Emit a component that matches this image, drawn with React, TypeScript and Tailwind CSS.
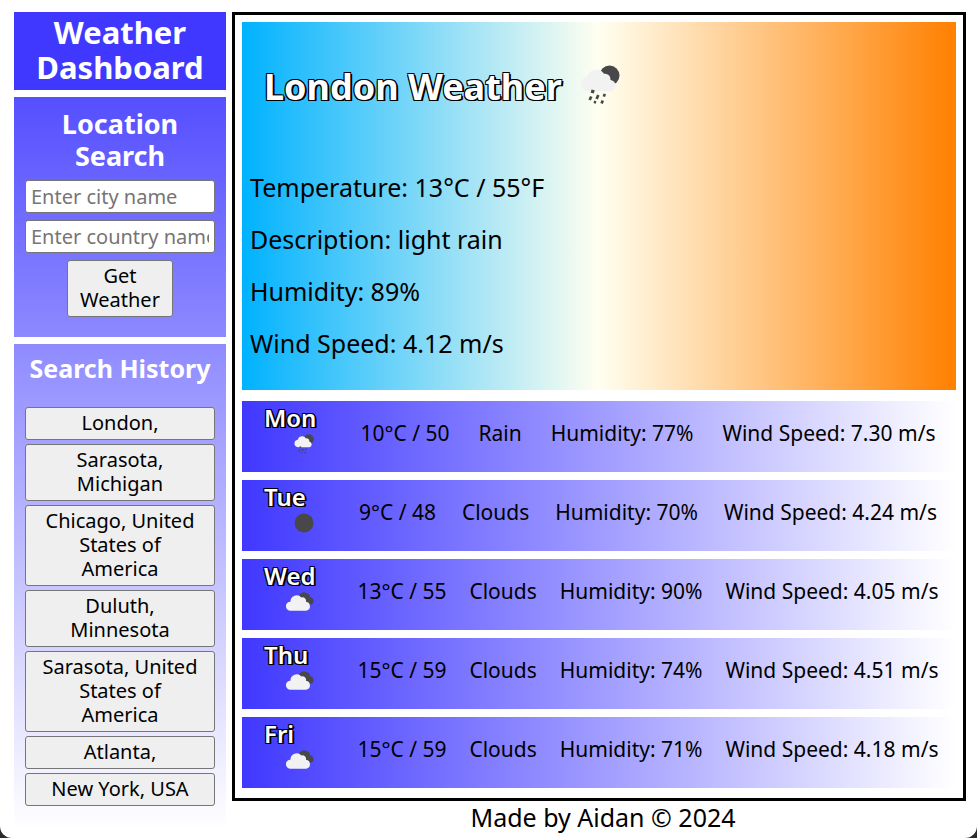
import { useState } from "react";

type IconName = "rain" | "dark" | "clouds";

const FONT = "font-['Noto_Sans',sans-serif]";

const OUTLINE =
  "[text-shadow:-1px_-1px_0_#000,1px_-1px_0_#000,-1px_1px_0_#000,1px_1px_0_#000,2px_1px_0_#000]";

const forecast: {
  day: string;
  icon: IconName;
  temp: string;
  sky: string;
  humidity: string;
  wind: string;
}[] = [
  { day: "Mon", icon: "rain", temp: "10°C / 50", sky: "Rain", humidity: "77%", wind: "7.30" },
  { day: "Tue", icon: "dark", temp: "9°C / 48", sky: "Clouds", humidity: "70%", wind: "4.24" },
  { day: "Wed", icon: "clouds", temp: "13°C / 55", sky: "Clouds", humidity: "90%", wind: "4.05" },
  { day: "Thu", icon: "clouds", temp: "15°C / 59", sky: "Clouds", humidity: "74%", wind: "4.51" },
  { day: "Fri", icon: "clouds", temp: "15°C / 59", sky: "Clouds", humidity: "71%", wind: "4.18" },
];

const searches = [
  "London,",
  "Sarasota, Michigan",
  "Chicago, United States of America",
  "Duluth, Minnesota",
  "Sarasota, United States of America",
  "Atlanta,",
  "New York, USA",
];

const conditions = [
  "Temperature: 13°C / 55°F",
  "Description: light rain",
  "Humidity: 89%",
  "Wind Speed: 4.12 m/s",
];

function WeatherIcon({ name, className }: { name: IconName; className: string }) {
  return (
    <svg viewBox="0 0 40 40" className={className} aria-hidden="true">
      {name === "rain" && (
        <>
          <circle cx="29.5" cy="10.5" r="10" fill="#48484a" />
          <path
            d="M8 26.5a7.6 7.6 0 0 1-.6-15.1 9.2 9.2 0 0 1 16.6-2.6 5.6 5.6 0 0 1 6.6 6.2 5.9 5.9 0 0 1 .4 11.5z"
            fill="#f2f2f2"
          />
          <g fill="#48484a">
            <path d="M11.5 24.500l3.200.8-.8 3.200-3.200-.8z" />
            <path d="M17 29.500l2.500 1-1.600 4-2.500-1z" />
            <path d="M10 31l2.500 1-1.600 3.500-2.500-1z" />
            <path d="M23.500 28.500l2.500.8-.9 2.800-2.500-.8z" />
            <path d="M14.200 35.500l2.200.7-.7 2.500-2.200-.7z" />
            <path d="M21.500 35l2.500 1-1.200 3-2.500-1z" />
          </g>
        </>
      )}
      {name === "dark" && <circle cx="20" cy="20" r="19" fill="#48484a" />}
      {name === "clouds" && (
        <>
          <path
            d="M18 12a7.5 7.5 0 0 1 11.500-4.500 5 5 0 0 1 4.500 5.500 5.800 5.800 0 0 1 3 10.500H28z"
            fill="#48484a"
          />
          <path
            d="M6.500 32.500a6.500 6.500 0 0 1-.2-13 9 9 0 0 1 15.700-6 5 5 0 0 1 6.500 6 6.600 6.600 0 0 1 .5 13z"
            fill="#f2f2f2"
          />
        </>
      )}
    </svg>
  );
}

const iconSize: Record<IconName, string> = {
  rain: "h-5 w-5",
  dark: "h-5 w-5",
  clouds: "h-7 w-7",
};

export default function App() {
  const [city, setCity] = useState("");
  const [country, setCountry] = useState("");

  return (
    <div className="bg-[#2b2b2b]">
      <div
        className={`${FONT} flex min-h-screen gap-1.5 rounded-b-xl bg-white pt-3 pr-[11px] pl-3.5 text-black`}
      >
        <aside className="flex w-[212px] shrink-0 flex-col gap-[7px] pb-2 text-center">
          <h1 className="bg-[#4038ff] pt-[3px] pb-[5px] text-[31px] leading-[35px] font-bold text-white">
            Weather Dashboard
          </h1>
          <form
            className="flex h-60 flex-col items-center gap-[7px] bg-linear-to-b/srgb from-[#554fff] to-[#8d89ff] px-[11px] pt-[11px]"
            onSubmit={(e) => e.preventDefault()}
          >
            <h2 className="mb-[1px] w-40 text-[27px] leading-8 font-bold text-white">
              Location Search
            </h2>
            <input
              aria-label="City name"
              className="h-[33px] w-full rounded-[3px] border border-[#767676] bg-white px-[5px] text-xl placeholder:text-[#757575]"
              placeholder="Enter city name"
              value={city}
              onChange={(e) => setCity(e.target.value)}
            />
            <input
              aria-label="Country name"
              className="h-[33px] w-full rounded-[3px] border border-[#767676] bg-white px-[5px] text-xl placeholder:text-[#757575]"
              placeholder="Enter country name"
              value={country}
              onChange={(e) => setCountry(e.target.value)}
            />
            <button
              type="submit"
              className="w-[106px] rounded-[3px] border border-[#767676] bg-[#efefef] px-1.5 pt-[3px] pb-1 text-xl leading-6"
            >
              Get Weather
            </button>
          </form>
          <section className="flex flex-1 flex-col gap-1 bg-linear-to-b/srgb from-[#8f8bff] to-white px-[11px] pt-2">
            <h2 className="mb-[19px] text-[25px] leading-8 font-bold whitespace-nowrap text-white">
              Search History
            </h2>
            {searches.map((place) => (
              <button
                key={place}
                type="button"
                className="rounded-[3px] border border-[#767676] bg-[#efefef] px-[15px] pt-[3px] pb-1 text-xl leading-6"
              >
                {place}
              </button>
            ))}
          </section>
        </aside>

        <div className="min-w-0 flex-1">
          <main className="flex flex-col gap-2 border-3 border-black px-[7px] pt-[7px] pb-2.5">
            <section className="mb-[3px] h-[368px] bg-linear-to-r/srgb from-[#00b2ff] via-[#fffff0] to-[#ff8000] px-2 pt-[37px]">
              <div className="mb-14 flex items-center gap-[18px] pl-3.5">
                <h2 className={`text-4xl leading-[56px] font-bold text-white ${OUTLINE}`}>
                  London Weather
                </h2>
                <WeatherIcon name="rain" className="mb-1 h-10 w-10" />
              </div>
              <div className="flex flex-col gap-5">
                {conditions.map((line) => (
                  <p key={line} className="text-[25px] leading-8">
                    {line}
                  </p>
                ))}
              </div>
            </section>
            {forecast.map((f) => (
              <article
                key={f.day}
                className="flex h-[71px] bg-linear-to-r/srgb from-[#4038ff] to-white pr-1.5"
              >
                <div className="w-[104px] shrink-0 pl-[22px]">
                  <h3 className={`text-2xl leading-[34px] font-semibold text-white ${OUTLINE}`}>
                    {f.day}
                  </h3>
                  <div className="-mt-[5px] flex h-7 w-[50px] items-center justify-end">
                    <WeatherIcon name={f.icon} className={iconSize[f.icon]} />
                  </div>
                </div>
                <div className="flex flex-1 justify-around pt-4 text-[21px] leading-8 whitespace-nowrap">
                  <p>{f.temp}</p>
                  <p>{f.sky}</p>
                  <p>Humidity: {f.humidity}</p>
                  <p>Wind Speed: {f.wind} m/s</p>
                </div>
              </article>
            ))}
          </main>
          <footer className="pl-2 text-center text-[25px] leading-8">
            Made by Aidan © 2024
          </footer>
        </div>
      </div>
    </div>
  );
}
